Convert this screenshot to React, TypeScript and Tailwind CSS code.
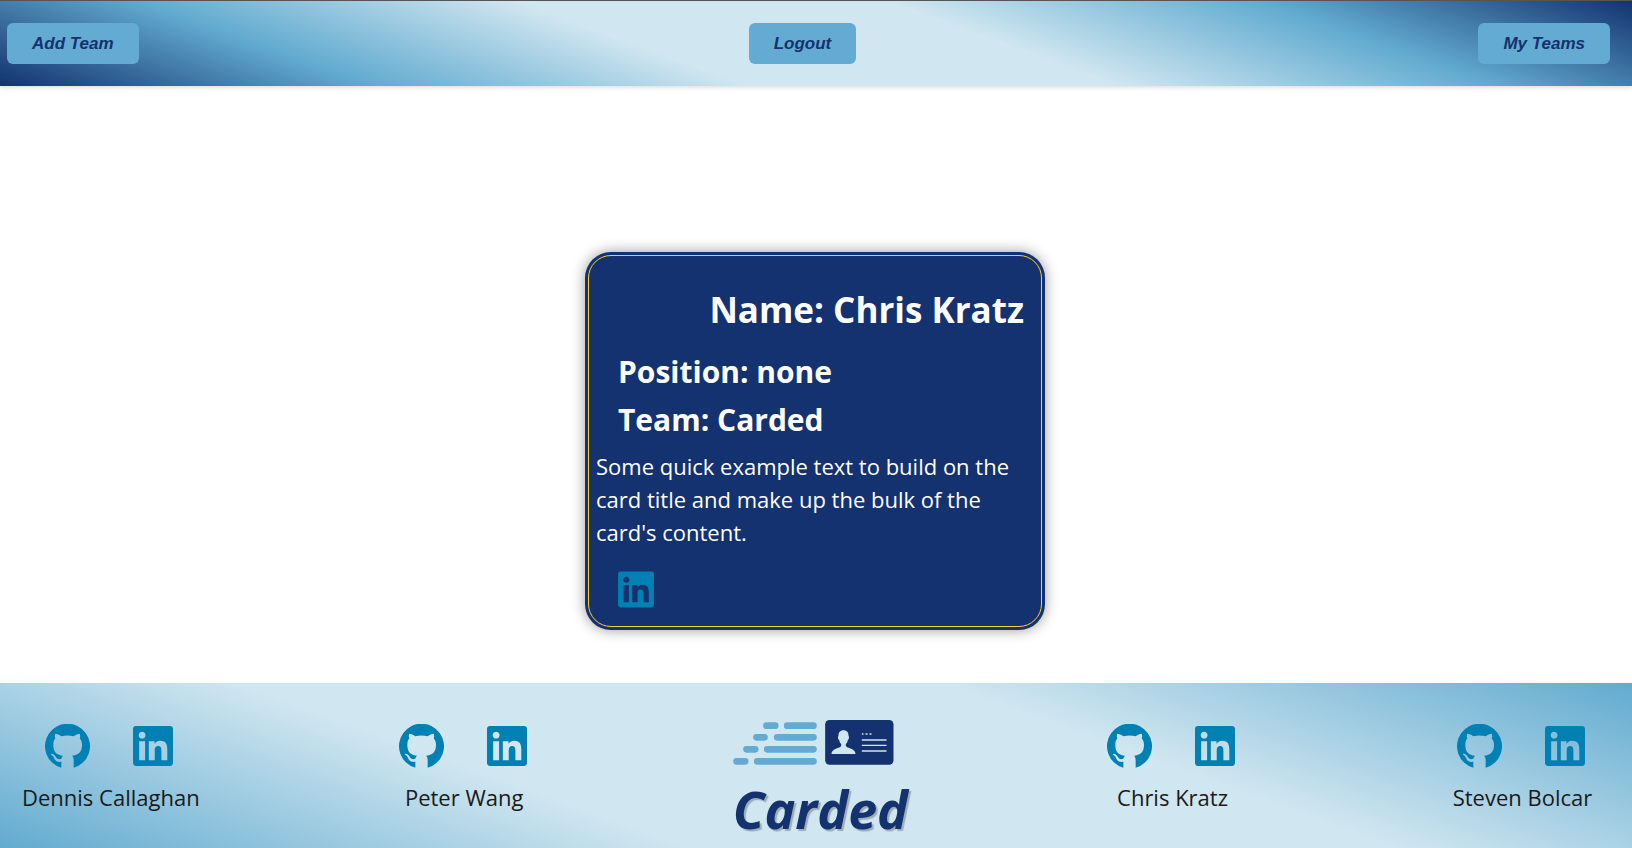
import { FaLinkedin } from "react-icons/fa";

const buttonClass =
  "rounded-md bg-[#64abd3] px-[25px] py-2 font-['Liberation_Sans',Arial,sans-serif] text-[17px] leading-[25px] font-bold italic text-[#13326f]";

function GithubMark() {
  return (
    <svg viewBox="44 40 135 131" className="h-[44px] w-[45px]" fill="currentColor" aria-hidden="true">
      <path d="M93 171A67.500 67.500 0 1 1 130 171V148C130 142 128 138 125 135C143 133 155 126 155 102C155 94 153 88 148 83C150 78 150 74 148 69C142 69 136 72 130 76C118 73 105 73 93 76C87 72 81 69 75 69C73 74 73 78 75 83C70 88 69 94 69 102C69 126 80 133 98 135C95 138 94 141 93 144C84 147 79 143 75 136C72 131 67 128 63 129C60 130 63 132 66 134C70 137 71 142 74 147C78 153 86 154 93 153Z" />
    </svg>
  );
}

function Logo() {
  return (
    <svg viewBox="38 60 482 135" className="h-[45px] w-[161px]" aria-hidden="true">
      <g stroke="#64abd3" strokeWidth="20" strokeLinecap="round">
        <path d="M138 77H164M200 77H279" />
        <path d="M108 112H132M170 112H279" />
        <path d="M78 148H104M140 148H279" />
        <path d="M48 184H74M110 184H279" />
      </g>
      <rect x="314" y="60" width="205" height="134" rx="13" fill="#13326f" />
      <path
        d="M369 91c-10 0-16 7-15 17-3 2-1 11 2 12 1 6 3 9 6 12v6c-3 7-29 7-29 24h72c0-17-26-17-29-24v-6c3-3 5-6 6-12 3-1 5-10 2-12 1-10-5-17-15-17z"
        fill="#d0e6f0"
      />
      <path d="M424 102h5m6 0h6m6 0h6" stroke="#d0e6f0" strokeWidth="5" />
      <path d="M424 120H498M424 136H498M424 153H498" stroke="#d0e6f0" strokeWidth="4" />
    </svg>
  );
}

function Member({ name }: { name: string }) {
  return (
    <div className="flex flex-col items-center pt-4">
      <div className="flex h-[46px] items-center gap-[43px] pr-[23px] pl-5 text-[#0180b4]">
        <a href="#github" aria-label={`${name} on GitHub`}>
          <GithubMark />
        </a>
        <a href="#linkedin" aria-label={`${name} on LinkedIn`}>
          <FaLinkedin className="h-[46px] w-[40px]" />
        </a>
      </div>
      <p className="mt-3 text-[22px] leading-[33px] text-[#1a1a1a]">{name}</p>
    </div>
  );
}

export default function App() {
  return (
    <div className="flex min-h-screen flex-col bg-white font-['Open_Sans',sans-serif]">
      <header className="border-t border-[#555555] bg-[linear-gradient(20deg,#13326f,#62abd0_20%,#d0e6f0_40%,#d0e6f0_60%,#62abd0_80%,#13326f)] bg-origin-border shadow-[0_2px_4px_rgba(0,0,0,0.12)]">
        <nav className="flex items-center justify-between py-[22px] pr-[22px] pl-[7px]">
          <button type="button" className={buttonClass}>Add Team</button>
          <button type="button" className={buttonClass}>Logout</button>
          <div className="pl-3">
            <button type="button" className={buttonClass}>My Teams</button>
          </div>
        </nav>
      </header>

      <main className="flex flex-1 flex-col items-center justify-end pr-[2px] pb-[53px]">
        <article className="w-[460px] rounded-[26px] bg-[#13326f] p-[3px] text-white shadow-[0_0_14px_rgba(0,0,0,0.4)]">
          <div className="rounded-[23px] border border-[#ffcf24] px-[7px] pt-[27px] pb-4">
            <h1 className="pr-[10px] text-right text-[35px] leading-[54px] font-bold">Name: Chris Kratz</h1>
            <div className="mt-3 flex flex-col gap-[3px] pl-[22px] text-[30px] leading-[45px] font-bold">
              <h2>Position: none</h2>
              <h2>Team: Carded</h2>
            </div>
            <p className="mt-2 text-[22px] leading-[33px]">
              Some quick example text to build on the card title and make up the bulk of the card's content.
            </p>
            <a href="#linkedin" aria-label="LinkedIn profile" className="mt-5 ml-[22px] block w-9 text-[#0180b4]">
              <FaLinkedin className="h-[41px] w-9" />
            </a>
          </div>
        </article>
      </main>

      <footer className="flex items-start justify-between bg-[linear-gradient(20deg,#62abd0,#d0e6f0_33%,#d0e6f0_67%,#62abd0)] pt-6 pr-6 pb-1 pl-[22px]">
        <Member name="Dennis Callaghan" />
        <Member name="Peter Wang" />
        <div className="flex flex-col items-start pt-[13px] pl-1">
          <Logo />
          <p className="mt-2 text-[52px] leading-[71px] font-bold italic text-[#13326f] [text-shadow:2px_2px_1px_rgba(0,0,0,0.25)]">
            Carded
          </p>
        </div>
        <Member name="Chris Kratz" />
        <Member name="Steven Bolcar" />
      </footer>
    </div>
  );
}
